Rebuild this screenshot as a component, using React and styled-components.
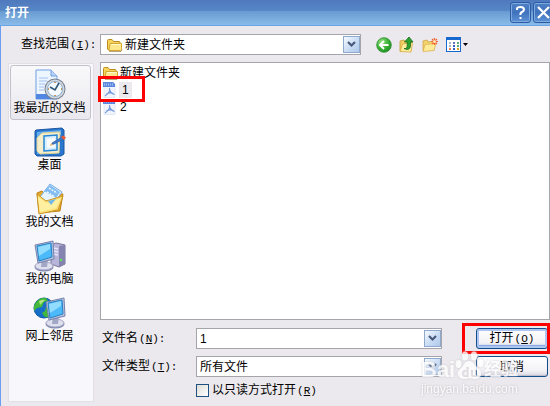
import React from 'react';
import styled, { createGlobalStyle, css } from 'styled-components';

const GlobalStyle = createGlobalStyle`
  *, *::before, *::after { box-sizing: border-box; }
  html { height: 100%; }
  body {
    margin: 0;
    min-height: 100%;
    background: #ebe9ed;
    overflow: hidden;
    color: #000;
    font: 12px/16px "Liberation Sans", "Noto Sans CJK SC", sans-serif;
  }
  button, input, select { font: inherit; color: inherit; margin: 0; }
`;

const Dialog = styled.main`
  position: relative;
  display: flex;
  flex-direction: column;
  min-height: 100vh;
  background: #ebe9ed;
  white-space: nowrap;
`;

const TitleBar = styled.header`
  display: flex;
  align-items: center;
  justify-content: space-between;
  height: 26px;
  padding-left: 5px;
  overflow: hidden;
  border-bottom: 1px solid #6ca4ea;
  background: linear-gradient(#4f79bd 0%, #5687c6 44%, #699bd2 46%, #8abbe8 100%);
`;

const Title = styled.h1`
  margin: 0;
  color: #fff;
  font-size: 12px;
  font-weight: 700;
`;

const WindowButtons = styled.div`
  display: flex;
  gap: 2px;
  margin-right: -4px;
`;

const WindowButton = styled.button`
  display: grid;
  place-items: center;
  width: 21px;
  height: 21px;
  padding: 0;
  border: 1px solid #2c5ca6;
  border-radius: 3px;
  box-shadow: inset 0 0 0 1px #7fa9df;
  background: linear-gradient(#4f7fc3, #3f73bd 50%, #5d92d5);
`;

const Body = styled.div`
  flex: 1;
  display: flex;
  flex-direction: column;
  gap: 7px;
  padding: 8px 0 4px 7px;
  border-left: 1px solid #6d9df0;
`;

const LookInRow = styled.div`
  display: flex;
  align-items: center;
`;

const Label = styled.label`
  flex: none;
  width: ${(p) => p.$width}px;
  padding-left: ${(p) => p.$indent || 0}px;
`;

const Keys = styled.span`
  font-family: "Liberation Mono", monospace;
  font-size: 11px;
  margin-left: 1px;
`;

const Field = styled.div`
  position: relative;
  flex: 1;
  display: flex;
  min-width: 0;
  height: 21px;
  border: 1px solid #a5a4ab;
  background: #fff;
`;

const entry = css`
  width: 100%;
  min-width: 0;
  padding: 0 20px 0 ${(p) => p.$indent || 3}px;
  border: 0;
  outline: 0;
  border-radius: 0;
  background: transparent;
`;

const TextEntry = styled.input`${entry}`;
const SelectEntry = styled.select`
  ${entry}
  appearance: none;
`;

const ArrowBox = styled.span`
  position: absolute;
  top: 1px;
  right: 0;
  bottom: 1px;
  width: 17px;
  display: grid;
  place-items: center;
  border: 1px solid #8fa9cc;
  background: linear-gradient(135deg, #f5faff, #c5d9f3 60%, #b1c8ea);
  pointer-events: none;
`;

const FieldIcon = styled.span`
  position: absolute;
  left: 5px;
  top: 2px;
  display: flex;
  pointer-events: none;
`;

const Tools = styled.div`
  display: flex;
  gap: 7px;
  padding: 0 82px 0 15px;
`;

const Tool = styled.button`
  display: flex;
  align-items: center;
  height: 18px;
  padding: 0;
  border: 0;
  background: none;
`;

const Columns = styled.div`
  flex: 1;
  display: flex;
  gap: 6px;
`;

const Places = styled.nav`
  flex: none;
  display: flex;
  flex-direction: column;
  width: 86px;
  padding: 1px 2px 1px 1px;
  margin-top: 1px;
  border: 1px solid #fff;
  border-right-color: #d0ced5;
  border-bottom-color: #c8c6ce;
  outline: 1px solid #e2e0e6;
  outline-offset: -1px;
  background: #f8f7fc;
`;

const Place = styled.button`
  display: flex;
  flex-direction: column;
  align-items: center;
  height: ${(p) => (p.$active ? 55 : 57)}px;
  padding: ${(p) => (p.$active ? 3 : 5)}px 2px 0 0;
  border: 1px solid ${(p) => (p.$active ? '#c3c1c9' : 'transparent')};
  border-radius: 3px;
  background: ${(p) => (p.$active ? 'linear-gradient(#f9f8fa, #e9e8ee)' : 'none')};
`;

const PlaceName = styled.span`
  line-height: 14px;
`;

const Main = styled.section`
  flex: 1;
  min-width: 0;
  display: flex;
  flex-direction: column;
`;

const FileList = styled.ul`
  flex: 1;
  margin: 0;
  padding: 1px;
  list-style: none;
  border: 1px solid #a5a4ab;
  background: #fff;
`;

const FileItem = styled.li`
  position: relative;
  display: flex;
  align-items: center;
  height: 17px;
`;

const FileName = styled.span`
  padding: 0 ${(p) => (p.$selected ? 3 : 1)}px;
  margin-left: ${(p) => (p.$folder ? 0 : 1)}px;
  background: ${(p) => (p.$selected ? '#ebe9ed' : 'none')};
`;

const Highlight = styled.span`
  position: absolute;
  inset: ${(p) => p.$inset};
  width: ${(p) => p.$width || 'auto'};
  border: 3px solid #f00;
  pointer-events: none;
  z-index: 1;
`;

const Form = styled.form`
  display: grid;
  grid-template-columns: minmax(0, 1fr) 72px;
  column-gap: 34px;
  row-gap: 7px;
  padding: 8px 2px 2px 2px;
`;

const FormRow = styled.div`
  display: flex;
  align-items: center;
`;

const Action = styled.button`
  position: relative;
  height: 21px;
  padding: 0;
  border: 1px solid #124f8c;
  border-radius: 3px;
  line-height: 16px;
  background: linear-gradient(#fff, #f3f2f6 70%, #dbd9e2);
  box-shadow: ${(p) => (p.$primary
    ? 'inset 0 0 0 2px #adc5f0, inset 0 -3px 1px #7da2e0'
    : 'inset 0 -1px 1px #bdbbc9')};
`;

const CheckRow = styled.label`
  display: flex;
  align-items: center;
  gap: 3px;
  height: 16px;
  margin: -2px 0 2px 94px;
`;

const CheckBox = styled.input`
  appearance: none;
  width: 13px;
  height: 13px;
  border: 1px solid #1c5180;
  background: linear-gradient(135deg, #dcdcd7, #fff);
`;

const Watermark = styled.div`
  position: absolute;
  right: 30px;
  bottom: 9px;
  width: 99px;
  color: #fff;
  opacity: 0.8;
  pointer-events: none;
  z-index: 2;
`;

const Brand = styled.div`
  display: flex;
  align-items: flex-end;
  height: 32px;
  font-size: 22px;
  font-weight: 700;
  line-height: 22px;
  filter: drop-shadow(0 0 1px #c4c2c9);
`;

const BrandChinese = styled.span`
  font-size: 17px;
`;

const Site = styled.div`
  font-size: 12px;
  line-height: 16px;
  filter: drop-shadow(0 0 1px #b0aeb6);
`;

const Shortcut = ({ letter, colon }) => (
  <Keys>(<u>{letter}</u>){colon && ':'}</Keys>
);

const Arrow = () => (
  <ArrowBox>
    <svg width="9" height="7" viewBox="0 0 9 7">
      <path d="M1 1l3.500 3.500L8 1" fill="none" stroke="#46597a" strokeWidth="2.200" />
    </svg>
  </ArrowBox>
);

const Paw = () => (
  <svg width="29" height="30" viewBox="0 0 29 30" fill="#fff">
    <ellipse cx="3.500" cy="13" rx="3" ry="4" />
    <ellipse cx="10" cy="5" rx="3.200" ry="4.500" />
    <ellipse cx="19" cy="5" rx="3.200" ry="4.500" />
    <ellipse cx="25.500" cy="12" rx="3" ry="4" />
    <path
      fillRule="evenodd"
      d="M14 10c5 0 6 5 10 8 5 4 1 11-5 10-3-1-6-1-9 0-6 1-10-6-5-10 4-3 4-8 9-8zM11.500 16v3H10c-4 0-4 7 0 7h3.500V16zM11.500 21v3H10.500c-1.500 0-1.500-3 0-3zM16 19v5q0 2 2 2h4v-7h-2v5h-2v-5z"
    />
  </svg>
);

const FolderIcon = () => (
  <svg width="17" height="16" viewBox="0 0 17 16">
    <path d="M1.500 12V3.500q0-1 1-1H6l1.500 2H13q1 0 1 1V13H2.500z" fill="#f6d35b" stroke="#bd8b20" />
    <path d="M3 13L4 6.500h11.500v6q0 1-1 1H3z" fill="#ffe88c" stroke="#d5a72e" />
    <path d="M5 7.500h9.500" stroke="#fffbd0" />
    <path d="M3 14.500h12l1-2" fill="none" stroke="#8a6d27" opacity=".6" />
  </svg>
);

const PdfIcon = () => (
  <svg width="16" height="17" viewBox="0 0 16 17">
    <path d="M2 1.500h9l2 2v13H2z" fill="#f1f4fc" stroke="#e3e8f5" />
    <path d="M1 1h10l2 2v3H1z" fill="#5b87dc" />
    <path d="M2.500 2.500v2M4.500 2.500v2M6.500 2.500v2M8.500 2.500v2M10.500 2.500v2" stroke="#a9c2f2" />
    <path d="M7.500 7c.8 3-1.500 6-4.500 8M7.500 7.500c0 3 2.500 5.500 5 6M4.500 13c2.500-1.500 5-1.500 7.500.2" fill="none" stroke="#7197df" strokeWidth="1.100" />
  </svg>
);

const BackIcon = () => (
  <svg width="16" height="16" viewBox="0 0 16 16">
    <defs>
      <radialGradient id="back" cx=".35" cy=".3" r=".8">
        <stop offset="0" stopColor="#a0e38b" /><stop offset=".5" stopColor="#3fb53b" /><stop offset="1" stopColor="#178c1d" />
      </radialGradient>
    </defs>
    <circle cx="8" cy="8" r="7.300" fill="url(#back)" stroke="#2d8c2d" strokeWidth=".8" />
    <path d="M12.500 8H5M8 4L4 8l4 4" fill="none" stroke="#fff" strokeWidth="2" />
  </svg>
);

const UpIcon = () => (
  <svg width="16" height="18" viewBox="0 0 16 18">
    <path d="M1 15V5l4-1 1 1.500 6-1V14z" fill="#f2cf63" stroke="#c79a32" strokeWidth=".8" />
    <path d="M1 15.500l2.500-7.500 10-1.500L12 16z" fill="#ffec9a" stroke="#d4ab42" strokeWidth=".8" />
    <path d="M5 12.500c3 .5 3.200-1 3.200-4V6H5.500L10 1l4 5h-2.500v3c0 4-2 5.500-6.500 3.500z" fill="#2ba12d" stroke="#176b20" strokeWidth=".8" />
  </svg>
);

const NewFolderIcon = () => (
  <svg width="17" height="16" viewBox="0 0 17 16">
    <path d="M1 13V4l4-1 1 2 6-1v9z" fill="#f3d36c" stroke="#cfa542" strokeWidth=".8" />
    <path d="M1 14.500l2-7 11-1-2 7z" fill="#ffec9b" stroke="#d9b14f" strokeWidth=".8" />
    <path d="M12.500 1v7M9 4.500h7M10 2l5 5M15 2l-5 5" stroke="#f26538" strokeWidth="1.200" />
    <circle cx="12.500" cy="4.500" r="1.500" fill="#ffe5b0" />
  </svg>
);

const ViewIcon = () => (
  <svg width="22" height="15" viewBox="0 0 22 15">
    <rect x=".5" y=".5" width="14" height="14" fill="#fff" stroke="#1768cf" />
    <path d="M0 1.500h15" stroke="#1768cf" strokeWidth="3" />
    <path d="M3 6h2M3 9h2" stroke="#a5b5cd" strokeWidth="2" />
    <path d="M7 6h2" stroke="#6c75b6" strokeWidth="2" />
    <path d="M11 6h2M11 9h2" stroke="#5bac6f" strokeWidth="2" />
    <path d="M7 9h2M7 12h2" stroke="#315fc5" strokeWidth="2" />
    <path d="M3 12h2" stroke="#ee7f56" strokeWidth="2" />
    <path d="M11 12h2" stroke="#d5a51c" strokeWidth="2" />
    <path d="M17 6h5l-2.500 3z" fill="#000" />
  </svg>
);

const RecentIcon = () => (
  <svg width="34" height="32" viewBox="0 0 34 32">
    <path d="M3 1h15l6 6v23H3z" fill="#edf5ff" stroke="#6e9fe3" />
    <path d="M3 25h21v5H3z" fill="#4f87e2" />
    <path d="M18 1v6h6" fill="#b9d2fa" stroke="#6e9fe3" />
    <path d="M6 9h9M6 12h8M6 15h6M6 18h5M6 21h5" stroke="#a2c2ee" />
    <circle cx="22" cy="20" r="10.500" fill="#77818f" />
    <circle cx="22" cy="20" r="9.500" fill="#d1d8df" />
    <circle cx="22" cy="20" r="7.500" fill="#f2faff" stroke="#8dafcf" />
    <path d="M22 13v1M22 26v1M15 20h1M28 20h1" stroke="#bf7c29" strokeWidth="1.500" />
    <path d="M17 18l5 3 4-7" fill="none" stroke="#315779" strokeWidth="1.600" />
  </svg>
);

const DesktopIcon = () => (
  <svg width="34" height="32" viewBox="0 0 34 32">
    <path d="M3 4l26-2 2 2v24l-3 2H4l-2-2V5z" fill="#2876ce" stroke="#1c579f" />
    <path d="M4 6l24-2v4L10 28H4z" fill="#64adf0" />
    <path d="M9 7l18-1-1 21-19 1-3-3V12z" fill="#f4edcb" stroke="#dfd193" />
    <path d="M11 10l13-1v15l-13 1z" fill="#d9efff" stroke="#2586d4" strokeWidth="1.500" />
    <path d="M14 13l8-1v9l-8 1z" fill="#f8fcff" />
    <path d="M19 17l10-6 2 2-10 5-3 1z" fill="#397bd0" stroke="#345ca1" strokeWidth=".7" />
    <path d="M28 11l2-1.500 3 2-2 2.500z" fill="#ed5a34" />
    <path d="M16.500 20l2-3 1.500 2z" fill="#f1bb6b" />
  </svg>
);

const DocumentsIcon = () => (
  <svg width="34" height="32" viewBox="0 0 34 32">
    <path d="M4 10l5-2 3 3h18l-3 17-21 2z" fill="#e5aa2c" stroke="#bd8319" />
    <path d="M17 1l12 8-10 14-12-9z" fill="#e5f4ff" stroke="#76ace3" />
    <path d="M17 2l10 7-4 6-12-7z" fill="#83bcf1" />
    <path d="M16 5l8 5M14 9l8 5" stroke="#e8f7ff" strokeWidth="1.500" strokeDasharray="2 1" />
    <path d="M4 11l9 7 17-5-5 14L6 31z" fill="#ffdf73" stroke="#c99428" />
    <path d="M5 14l9 6 14-5-5 10L7 29z" fill="#fff0a0" />
    <path d="M15 18l8-2-5 6z" fill="#70b7e9" />
  </svg>
);

const Monitor = ({ x = 0, y = 0 }) => (
  <g transform={`translate(${x} ${y})`}>
    <ellipse cx="10" cy="26" rx="9.500" ry="4.500" fill="#7b84a7" />
    <ellipse cx="10" cy="25" rx="9" ry="4" fill="#dfe0ef" stroke="#a6a8c8" />
    <path d="M8 18h6l-1 8H7z" fill="#a2a7c6" />
    <path d="M1 4l18-4 1 18-16 4z" fill="#bbc3df" stroke="#7682ad" />
    <path d="M3 5l14-3 1 14-13 4z" fill="#4cb9f8" stroke="#2680c3" />
    <path d="M4 6l12-3v5L5 15z" fill="#92ddff" />
  </g>
);

const ComputerIcon = () => (
  <svg width="34" height="32" viewBox="0 0 34 32">
    <path d="M18 5l5-2 9 2v19l-6 3-8-3z" fill="#b7b5d8" stroke="#777398" />
    <path d="M26 6l6-1v19l-6 3z" fill="#8584b0" />
    <path d="M20 8l5 1M20 11l5 1M20 14l5 1" stroke="#e5e6fc" strokeWidth="1.500" />
    <circle cx="28" cy="20" r="1.300" fill="#60e15b" />
    <Monitor x={1} y={1} />
  </svg>
);

const NetworkIcon = () => (
  <svg width="34" height="32" viewBox="0 0 34 32">
    <circle cx="11" cy="11" r="10" fill="#176fc8" stroke="#0a55a2" />
    <path d="M4 4q4-4 9-3l2 3-4 1-2 5-5 1-3 3q-1-6 3-10zM13 10l6-2v8q-3 5-7 4l-3-4 3-2z" fill="#43b83b" />
    <path d="M6 4q4-2 6-1l-5 5z" fill="#b3e67d" />
    <Monitor x={12} y={1} />
  </svg>
);

const places = [
  ['我最近的文档', RecentIcon],
  ['桌面', DesktopIcon],
  ['我的文档', DocumentsIcon],
  ['我的电脑', ComputerIcon],
  ['网上邻居', NetworkIcon],
];

export default function App() {
  return (
    <Dialog lang="zh-CN">
      <GlobalStyle />
      <TitleBar>
        <Title>打开</Title>
        <WindowButtons>
          <WindowButton aria-label="帮助">
            <svg width="13" height="15" viewBox="0 0 13 15">
              <path d="M3 5V3.500Q3 2 6.500 2T10 4.500Q10 6 8 7T6.500 10" fill="none" stroke="#fff" strokeWidth="2" />
              <path d="M5.500 12h2v2h-2z" fill="#fff" />
            </svg>
          </WindowButton>
          <WindowButton aria-label="关闭">
            <svg width="13" height="13" viewBox="0 0 13 13">
              <path d="M1 1l11 11M12 1L1 12" stroke="#fff" strokeWidth="2.300" />
            </svg>
          </WindowButton>
        </WindowButtons>
      </TitleBar>
      <Body>
        <LookInRow>
          <Label htmlFor="look-in" $width={92} $indent={13}>查找范围<Shortcut letter="I" colon /></Label>
          <Field>
            <FieldIcon><FolderIcon /></FieldIcon>
            <SelectEntry id="look-in" $indent={24}><option>新建文件夹</option></SelectEntry>
            <Arrow />
          </Field>
          <Tools>
            <Tool aria-label="后退"><BackIcon /></Tool>
            <Tool aria-label="向上一级"><UpIcon /></Tool>
            <Tool aria-label="新建文件夹"><NewFolderIcon /></Tool>
            <Tool aria-label="查看"><ViewIcon /></Tool>
          </Tools>
        </LookInRow>
        <Columns>
          <Places>
            {places.map(([name, Icon], i) => (
              <Place key={name} $active={i === 0}>
                <Icon />
                <PlaceName>{name}</PlaceName>
              </Place>
            ))}
          </Places>
          <Main>
            <FileList>
              <FileItem><FolderIcon /><FileName $folder>新建文件夹</FileName></FileItem>
              <FileItem>
                <PdfIcon /><FileName $selected>1</FileName>
                <Highlight $inset="-5px auto -4px -4px" $width="47px" />
              </FileItem>
              <FileItem><PdfIcon /><FileName>2</FileName></FileItem>
            </FileList>
            <Form onSubmit={(e) => e.preventDefault()}>
              <FormRow>
                <Label htmlFor="file-name" $width={94}>文件名<Shortcut letter="N" colon /></Label>
                <Field>
                  <TextEntry id="file-name" defaultValue="1" />
                  <Arrow />
                </Field>
              </FormRow>
              <Action $primary>
                打开<Shortcut letter="O" />
                <Highlight $inset="-6px -3px -6px -15px" />
              </Action>
              <FormRow>
                <Label htmlFor="file-type" $width={94}>文件类型<Shortcut letter="T" colon /></Label>
                <Field>
                  <SelectEntry id="file-type"><option>所有文件</option></SelectEntry>
                  <Arrow />
                </Field>
              </FormRow>
              <Action type="button">取消</Action>
              <CheckRow>
                <CheckBox type="checkbox" />
                <span>以只读方式打开<Shortcut letter="R" /></span>
              </CheckRow>
            </Form>
          </Main>
        </Columns>
      </Body>
      <Watermark>
        <Brand>
          <span>Bai</span>
          <Paw />
          <BrandChinese>经验</BrandChinese>
        </Brand>
        <Site>jingyan.baidu.com</Site>
      </Watermark>
    </Dialog>
  );
}
